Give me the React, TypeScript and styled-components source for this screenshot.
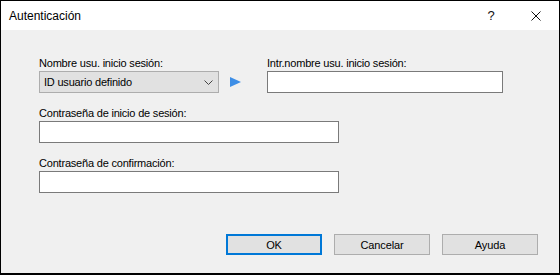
import * as React from "react";
import styled, { createGlobalStyle } from "styled-components";

const GlobalStyle = createGlobalStyle`
  html, body {
    margin: 0;
    padding: 0;
    background: #ffffff;
  }
  * {
    box-sizing: border-box;
  }
`;

const Window = styled.div`
  width: 560px;
  height: 275px;
  border: 1px solid #000;
  border-bottom-width: 2px;
  display: flex;
  flex-direction: column;
  font-family: "Liberation Sans", Arial, sans-serif;
  color: #000;
`;

const TitleBar = styled.div`
  height: 29px;
  flex: none;
  background: #fff;
  display: flex;
  align-items: center;
  padding-left: 8px;
  font-size: 12px;
`;

const Title = styled.div`
  flex: 1;
  padding-top: 1px;
`;

const TitleButton = styled.div<{ $width: number }>`
  width: ${(p) => p.$width}px;
  height: 29px;
  display: flex;
  align-items: center;
  justify-content: center;
  font-size: 13px;
  color: #111;
`;

const Client = styled.div`
  flex: 1;
  background: #f0f0f0;
  display: flex;
  flex-direction: column;
  padding: 27px 21px 18px 38px;
`;

const Form = styled.div`
  display: grid;
  grid-template-columns: 180px 48px 236px;
  row-gap: 14px;
  align-items: end;
`;

const Field = styled.div<{ $span?: number }>`
  display: flex;
  flex-direction: column;
  gap: 1px;
  grid-column: span ${(p) => p.$span ?? 1};
`;

const Label = styled.label`
  font-size: 11px;
  letter-spacing: -0.2px;
  line-height: 13px;
  white-space: nowrap;
`;

const TextBox = styled.div<{ $width: number }>`
  width: ${(p) => p.$width}px;
  height: 22px;
  background: #fff;
  border: 1px solid #7a7a7a;
`;

const Combo = styled.div`
  width: 180px;
  height: 22px;
  background: #e1e1e1;
  border: 1px solid #adadad;
  display: flex;
  align-items: center;
  padding: 0 5px 0 4px;
  font-size: 11px;
  letter-spacing: -0.2px;
`;

const ComboText = styled.span`
  flex: 1;
`;

const ArrowCell = styled.div`
  height: 22px;
  display: flex;
  align-items: center;
  padding-left: 11px;
`;

const ButtonRow = styled.div`
  margin-top: auto;
  display: flex;
  justify-content: flex-end;
  gap: 12px;
`;

const Button = styled.div<{ $default?: boolean }>`
  width: 96px;
  height: 21px;
  background: #e1e1e1;
  border: ${(p) => (p.$default ? "2px solid #0078d7" : "1px solid #adadad")};
  display: flex;
  align-items: center;
  justify-content: center;
  font-size: 11px;
  letter-spacing: -0.1px;
`;

function Chevron() {
  return (
    <svg width="9" height="5" viewBox="0 0 9 5">
      <polyline points="0.5,0.5 4.5,4.5 8.5,0.5" fill="none" stroke="#444" strokeWidth="1" />
    </svg>
  );
}

function CloseIcon() {
  return (
    <svg width="10" height="10" viewBox="0 0 10 10">
      <path d="M0.5 0.5 L9.5 9.5 M9.5 0.5 L0.5 9.5" stroke="#111" strokeWidth="1" />
    </svg>
  );
}

export default function App() {
  return (
    <>
      <GlobalStyle />
      <Window>
        <TitleBar>
          <Title>Autenticación</Title>
          <TitleButton $width={44}>?</TitleButton>
          <TitleButton $width={46}>
            <CloseIcon />
          </TitleButton>
        </TitleBar>
        <Client>
          <Form>
            <Field>
              <Label>Nombre usu. inicio sesión:</Label>
              <Combo>
                <ComboText>ID usuario definido</ComboText>
                <Chevron />
              </Combo>
            </Field>
            <ArrowCell>
              <svg width="11" height="10" viewBox="0 0 11 10">
                <polygon points="0,0 11,5 0,10" fill="#3d8ee6" />
              </svg>
            </ArrowCell>
            <Field>
              <Label>Intr.nombre usu. inicio sesión:</Label>
              <TextBox $width={236} />
            </Field>
            <Field $span={3}>
              <Label>Contraseña de inicio de sesión:</Label>
              <TextBox $width={300} />
            </Field>
            <Field $span={3}>
              <Label>Contraseña de confirmación:</Label>
              <TextBox $width={300} />
            </Field>
          </Form>
          <ButtonRow>
            <Button $default>OK</Button>
            <Button>Cancelar</Button>
            <Button>Ayuda</Button>
          </ButtonRow>
        </Client>
      </Window>
    </>
  );
}
